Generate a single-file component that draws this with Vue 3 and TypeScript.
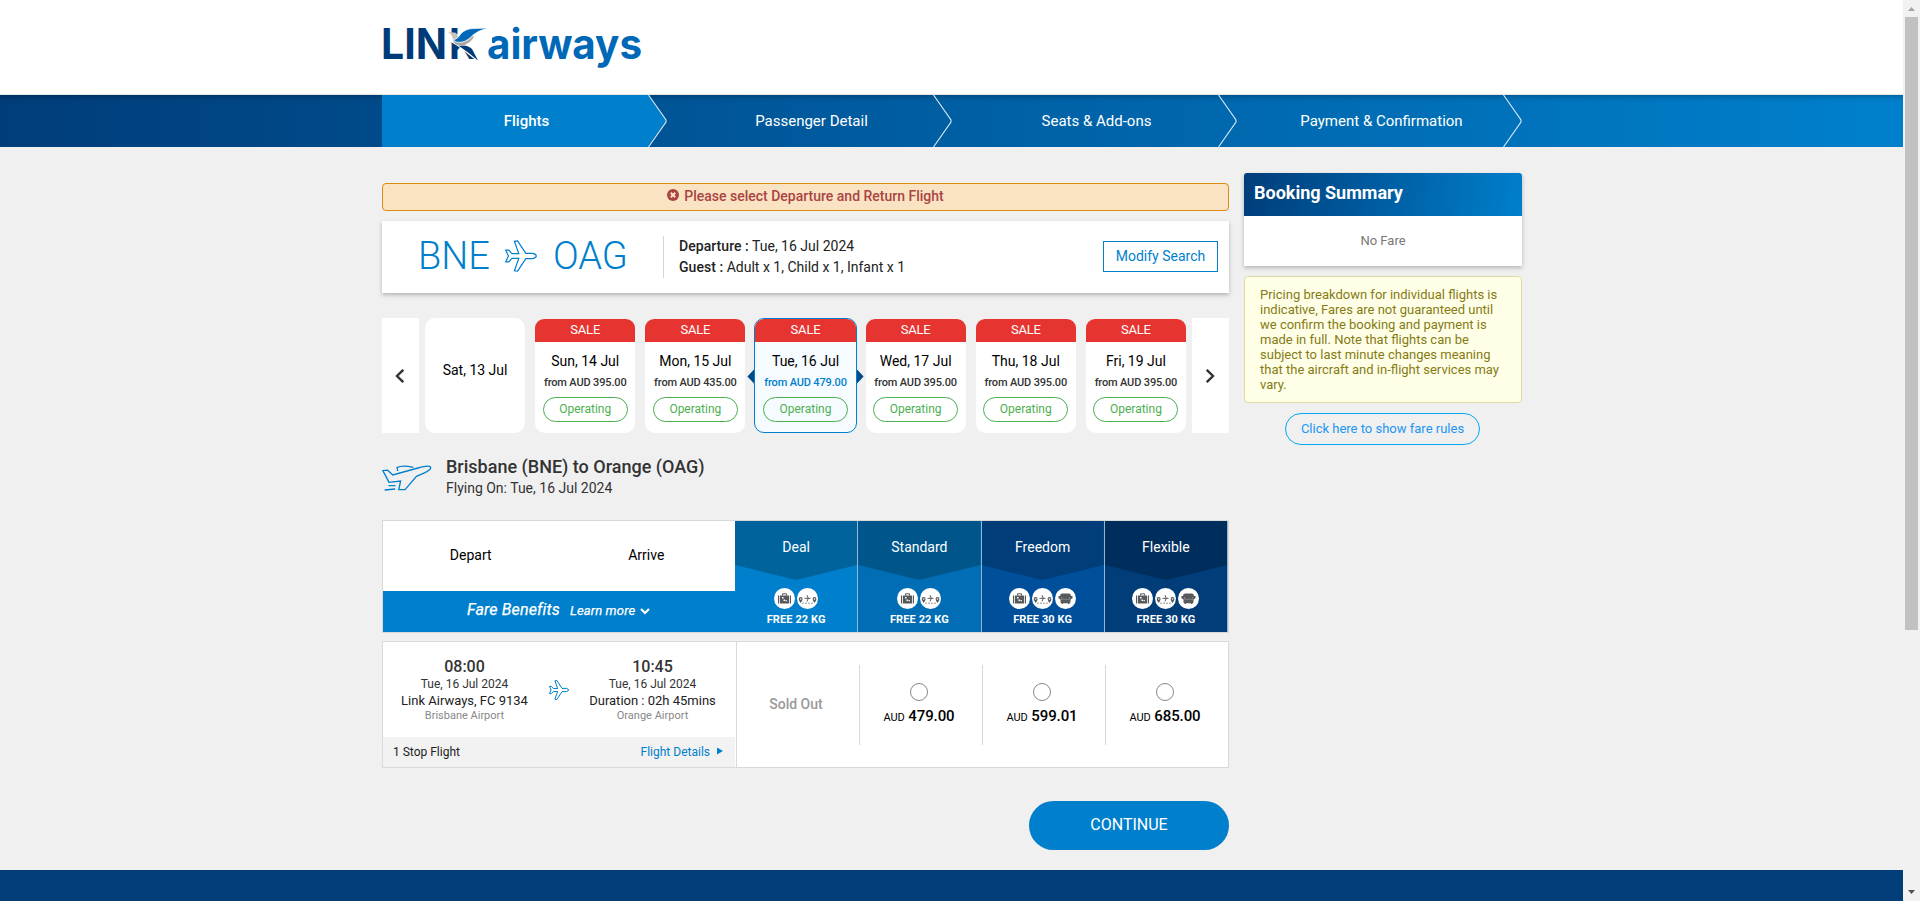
<script setup lang="ts">
interface DayFare {
  label: string
  price?: string
  active?: boolean
}
interface FareBrand {
  name: string
  key: string
  baggage: string
  seat: boolean
}

const steps: string[] = ['Flights', 'Passenger Detail', 'Seats & Add-ons', 'Payment & Confirmation']

const days: DayFare[] = [
  { label: 'Sat, 13 Jul' },
  { label: 'Sun, 14 Jul', price: '395.00' },
  { label: 'Mon, 15 Jul', price: '435.00' },
  { label: 'Tue, 16 Jul', price: '479.00', active: true },
  { label: 'Wed, 17 Jul', price: '395.00' },
  { label: 'Thu, 18 Jul', price: '395.00' },
  { label: 'Fri, 19 Jul', price: '395.00' },
]

const brands: FareBrand[] = [
  { name: 'Deal', key: 'deal', baggage: 'FREE 22 KG', seat: false },
  { name: 'Standard', key: 'standard', baggage: 'FREE 22 KG', seat: false },
  { name: 'Freedom', key: 'freedom', baggage: 'FREE 30 KG', seat: true },
  { name: 'Flexible', key: 'flexible', baggage: 'FREE 30 KG', seat: true },
]

const prices: string[] = ['479.00', '599.01', '685.00']
</script>

<template>
  <div class="window">
    <div class="page">
      <header class="top">
        <svg class="logo" width="264" height="60" viewBox="0 0 264 60">
          <text x="-1" y="44" class="logo-link" textLength="66" lengthAdjust="spacingAndGlyphs">LIN</text>
          <text x="67" y="44" class="logo-link" textLength="28" lengthAdjust="spacingAndGlyphs">K</text>
          <text x="105" y="44" class="logo-air" textLength="155" lengthAdjust="spacingAndGlyphs">airways</text>
          <path d="M76.500 12 H110 V30 L96 30 L106 46 L96 47 L77 32 L69 27 L69 20 L76.500 19 Z" fill="#fff" />
          <path d="M77 31 Q85 29 90 34 L96 45.500 Q86 37 77 31 Z" fill="#003a78" />
          <path d="M66 17 L72 17.500 Q75.500 17.500 76 22 Q84 17 92 21 Q87 29 79 31 Q72 30 70.500 23 Q70 19 66 17Z" fill="#c8c4bf" />
          <path d="M71 26 Q78 30 86 26 L92 21 Q90 28 79 31 Q73 30 71 26Z" fill="#aaa6a1" />
          <path d="M71.500 25 Q76 24 79 18.500 Q84 13.500 92 13.500 L106 13 Q96 15.500 91 20 Q83 29 74 27Z" fill="#0068b7" stroke="#fff" stroke-width=".7" />
        </svg>
      </header>

      <nav class="steps">
        <div class="steps-inner">
          <div v-for="(s, i) in steps" :key="s" class="step" :class="{ current: i === 0 }">
            <span>{{ s }}</span>
            <svg class="step-edge" width="20" height="52" viewBox="0 0 20 52">
              <path d="M.5 0 L18 25 V27 L.5 52" fill="none" stroke="#dbe9f5" stroke-width="1.1" />
            </svg>
          </div>
        </div>
      </nav>

      <main class="content">
        <section class="left">
          <div class="alert">
            <svg width="12" height="12" viewBox="0 0 12 12">
              <circle cx="6" cy="6" r="6" fill="#a94442" />
              <path d="M3.8 3.8 8.2 8.2 M8.2 3.8 3.8 8.2" stroke="#fae3c3" stroke-width="2" />
            </svg>
            <span>Please select Departure and Return Flight</span>
          </div>

          <div class="search">
            <div class="route">
              <span>BNE</span>
              <svg class="plane" width="32" height="32" viewBox="0 0 32 32">
                <path d="M.8 10.2H3.8L7 13.6H13.8L9.4 1.2 12.6 .8 20.8 13.4H28Q31.3 14.4 31.3 16 31.3 17.6 28 18.6H20.8L12.6 31.2 9.4 30.8 13.8 18.4H7L3.8 21.8H.8L3.4 16Z" />
              </svg>
              <span>OAG</span>
            </div>
            <div class="trip">
              <div><b>Departure :</b> Tue, 16 Jul 2024</div>
              <div><b>Guest :</b> Adult x 1, Child x 1, Infant x 1</div>
            </div>
            <button class="modify">Modify Search</button>
          </div>

          <div class="days">
            <div class="pager">
              <svg width="10" height="14" viewBox="0 0 10 14"><path d="M8.3 .8 2 7 8.3 13.2" /></svg>
            </div>
            <div class="day-row">
              <div v-for="d in days" :key="d.label" class="day" :class="{ active: d.active, empty: !d.price }">
                <template v-if="d.price">
                  <div class="sale">SALE</div>
                  <div class="day-label">{{ d.label }}</div>
                  <div class="day-price">from AUD {{ d.price }}</div>
                  <div class="operating">Operating</div>
                </template>
                <div v-else class="day-label">{{ d.label }}</div>
              </div>
            </div>
            <div class="pager">
              <svg width="10" height="14" viewBox="0 0 10 14"><path d="M1.7 .8 8 7 1.7 13.2" /></svg>
            </div>
          </div>

          <div class="leg">
            <svg width="50" height="28" viewBox="0 0 50 28">
              <path d="M.8 6.6 5.6 6.2 10.8 11 36 4Q47 .8 48.6 3.2 49.6 5.4 43 8.6L34.5 12.4 23 25.6H16.8L18.6 17 7 18.4Q4.4 13 .8 6.6Z" />
              <path d="M15.8 7 15 3.6Q20 .6 31.4 3.4" />
              <path d="M6.5 21.6H13.5 M2.6 26 13.2 25" />
            </svg>
            <div>
              <h2>Brisbane (BNE) to Orange (OAG)</h2>
              <p>Flying On: Tue, 16 Jul 2024</p>
            </div>
          </div>

          <div class="fare-head">
            <div class="fh-left">
              <div class="fh-labels"><span>Depart</span><span>Arrive</span></div>
              <div class="benefits">
                <em>Fare Benefits</em><em class="more">Learn more</em>
                <svg width="10" height="7" viewBox="0 0 10 7"><path d="M1 1 5 5 9 1" fill="none" stroke="#fff" stroke-width="2.2" /></svg>
              </div>
            </div>
            <div v-for="b in brands" :key="b.key" class="brand" :class="b.key">
              <div class="brand-name">{{ b.name }}</div>
              <div class="perks">
                <svg width="21" height="21" viewBox="0 0 21 21">
                  <circle cx="10.5" cy="10.5" r="10.5" fill="#fff" />
                  <path d="M8.500 7.500V5.800H12.500V7.500" fill="none" stroke="#58595b" />
                  <path d="M4 7.500H5.200V15.500H4Z M6 7.500H15V15.500H6Z M15.800 7.500H17V15.500H15.800Z" fill="#58595b" />
                  <path d="M8 9h1.500v1.500H8Z M9.500 11.500h1.500v1.500H9.500Z M11.500 12h1.300v1.300H11.500Z" fill="#fff" />
                </svg>
                <svg width="21" height="21" viewBox="0 0 21 21">
                  <circle cx="10.5" cy="10.5" r="10.5" fill="#fff" />
                  <path d="M3.7 9A2 2 0 0 1 5.6 11Q5.6 12.5 3.7 15 1.7 12.5 1.7 11A2 2 0 0 1 3.7 9Z M17.5 9A2 2 0 0 1 19.4 11Q19.4 12.5 17.5 15 15.6 12.5 15.6 11A2 2 0 0 1 17.5 9Z" fill="#58595b" />
                  <circle cx="3.7" cy="11" r=".8" fill="#fff" /><circle cx="17.5" cy="11" r=".8" fill="#fff" />
                  <path d="M7.5 10.3H13.5 M10 7.2 11.3 10.3 10 13.4" fill="none" stroke="#58595b" />
                  <path d="M5 15.2H16" stroke="#999" stroke-dasharray="2 1" />
                </svg>
                <svg v-if="b.seat" width="21" height="21" viewBox="0 0 21 21">
                  <circle cx="10.5" cy="10.5" r="10.5" fill="#fff" />
                  <path d="M7 5.5H14Q16 5.500 16 8H17.500V10.300L15.500 11.500V14.500L14.500 15V16H13V15.300H8V16H6.500V15L5.500 14.500V11.500L3.500 10.300V8H5Q5 5.500 7 5.500Z" fill="#58595b" />
                  <path d="M6.500 9V11.300H14.500V9" fill="none" stroke="#aaa" stroke-width=".5" />
                </svg>
              </div>
              <div class="kg">{{ b.baggage }}</div>
            </div>
          </div>

          <div class="flight">
            <div class="fl-left">
              <div class="fl-info">
                <div class="stop">
                  <strong>08:00</strong><span class="dt">Tue, 16 Jul 2024</span>
                  <span class="ln">Link Airways, FC 9134</span><span class="ap">Brisbane Airport</span>
                </div>
                <svg class="plane small" width="20" height="20" viewBox="0 0 32 32">
                  <path d="M.8 10.2H3.8L7 13.6H13.8L9.4 1.2 12.6 .8 20.8 13.4H28Q31.3 14.4 31.3 16 31.3 17.6 28 18.6H20.8L12.6 31.2 9.4 30.8 13.8 18.4H7L3.8 21.8H.8L3.4 16Z" />
                </svg>
                <div class="stop">
                  <strong>10:45</strong><span class="dt">Tue, 16 Jul 2024</span>
                  <span class="ln">Duration : 02h 45mins</span><span class="ap">Orange Airport</span>
                </div>
              </div>
              <div class="fl-foot">
                <span>1 Stop Flight</span>
                <a>Flight Details<i></i></a>
              </div>
            </div>
            <div class="fares">
              <div class="fare sold">Sold Out</div>
              <div v-for="p in prices" :key="p" class="fare">
                <span class="radio"></span>
                <div class="amount"><small>AUD</small> {{ p }}</div>
              </div>
            </div>
          </div>

          <button class="continue">CONTINUE</button>
        </section>

        <aside class="right">
          <div class="summary">
            <h3>Booking Summary</h3>
            <p>No Fare</p>
          </div>
          <div class="note">
            Pricing breakdown for individual flights is indicative, Fares are not guaranteed until we confirm the booking and payment is made in full. Note that flights can be subject to last minute changes meaning that the aircraft and in-flight services may vary.
          </div>
          <button class="rules">Click here to show fare rules</button>
        </aside>
      </main>
      <footer class="foot"></footer>
    </div>

    <div class="scrollbar">
      <svg width="17" height="17" viewBox="0 0 17 17"><path d="M5 11H12L8.5 7Z" fill="#a3a3a3" /></svg>
      <div class="thumb"></div>
      <svg width="17" height="17" viewBox="0 0 17 17"><path d="M5 6H12L8.5 10Z" fill="#505050" /></svg>
    </div>
  </div>
</template>

<style>
body { overflow: hidden; background: #f0f0f0; }
</style>

<style scoped>
* { box-sizing: border-box; }
.window { display: flex; width: 1920px; height: 901px; overflow: hidden; font-family: Roboto, "Liberation Sans", sans-serif; font-size: 14px; color: #222; background: #f0f0f0; }
.page { width: 1903px; display: flex; flex-direction: column; }
button { font-family: inherit; padding: 0; }
h2, h3, p { margin: 0; font-weight: 400; }
svg { display: block; flex: none; }

.top { height: 95px; background: #fff; border-bottom: 1px solid #e4e4e4; padding: 15px 0 0 382px; }
.logo { overflow: visible; }
.logo-link, .logo-air { font-family: Inter, sans-serif; font-weight: 700; font-size: 42px; fill: #003a78; }
.logo-air { fill: #0068b7; }

.steps { height: 52px; padding-left: 382px; background: linear-gradient(90deg, #003d7a, #0080cc); box-shadow: inset 0 7px 7px -7px rgba(0, 0, 0, .4); }
.steps-inner { display: flex; width: 1140px; height: 52px; }
.step { position: relative; width: 285px; height: 52px; padding-left: 4px; display: flex; align-items: center; justify-content: center; color: #fff; font-size: 15px; }
.step.current { font-weight: 500; }
.step.current::before { content: ""; position: absolute; inset: 0; background: #007fcc; clip-path: polygon(0 0, 266px 0, 284px 26px, 266px 52px, 0 52px); }
.step span { position: relative; }
.step-edge { position: absolute; left: 265.5px; top: 0; }

.content { display: flex; gap: 15px; width: 1140px; margin-left: 382px; height: 723px; }
.left { width: 847px; padding-top: 36px; display: flex; flex-direction: column; }
.right { width: 278px; padding-top: 26px; }

.alert { height: 28px; border: 1px solid #dd8b0b; border-radius: 4px; background: #fae3c3; color: #a94442; font-weight: 500; display: flex; justify-content: center; gap: 5px; line-height: 25px; }
.alert svg { margin-top: 5px; }

.search { height: 72px; margin-top: 10px; background: #fff; box-shadow: 0 2px 4px rgba(0, 0, 0, .25); display: flex; align-items: center; padding-right: 11px; }
.route { width: 281px; padding-left: 36px; display: flex; align-items: center; font-weight: 300; font-size: 38px; line-height: 70px; padding-bottom: 2px; color: #007fcc; }
.plane { fill: none; stroke: #007fcc; stroke-width: 1.2; margin: 0 16px 0 15px; }
.trip { flex: 1; height: 42px; border-left: 1px solid #d5d5d5; padding-left: 15px; line-height: 21px; }
.trip b { font-weight: 500; letter-spacing: .05px; }
.modify { width: 115px; height: 31px; margin-bottom: 2px; background: #fff; border: 1px solid #007fcc; color: #007fcc; font-size: 14px; }

.days { display: flex; height: 115px; margin-top: 25px; }
.pager { width: 37px; background: #fff; display: flex; align-items: center; justify-content: center; }
.pager svg { fill: none; stroke: #333; stroke-width: 2.4; margin-right: 1px; }
.day-row { flex: 1; display: grid; grid-template-columns: repeat(7, 1fr); gap: 10px; padding: 0 6px; }
.day { position: relative; background: #fff; border-radius: 10px; text-align: center; margin-top: 1px; display: flex; flex-direction: column; align-items: center; color: #000; white-space: nowrap; }
.day.empty { margin-top: 0; padding-top: 43px; }
.sale { width: 100%; height: 23px; line-height: 22px; background: #e63431; color: #fff; font-size: 13px; letter-spacing: -.2px; border-radius: 9px 9px 0 0; }
.day-label { font-size: 14px; line-height: 18px; }
.sale + .day-label { margin-top: 10px; }
.day-price { font-size: 11px; font-weight: 500; letter-spacing: -.15px; color: #333; line-height: 14px; margin-top: 6px; }
.operating { width: 85px; height: 25px; margin-top: 7px; border: 1px solid #4caf50; border-radius: 13px; color: #4caf50; font-size: 12px; line-height: 22px; }
.day.active { margin: 0 -1px; border: 1px solid #007fcc; background: #f6fbff; }
.active .day-price { color: #007fcc; }
.active::before, .active::after { content: ""; position: absolute; top: 50px; width: 7px; height: 15px; background: #004b87; }
.active::before { left: -8px; clip-path: polygon(0 50%, 100% 0, 100% 100%); }
.active::after { right: -8px; clip-path: polygon(100% 50%, 0 0, 0 100%); }

.leg { display: flex; gap: 14px; margin-top: 23px; height: 43px; }
.leg svg { margin-top: 8px; fill: none; stroke: #007fcc; stroke-width: 1.3; }
.leg h2 { font-size: 18px; font-weight: 500; line-height: 22px; color: #333; letter-spacing: 0; }
.leg p { line-height: 21px; color: #333; }

.fare-head { display: flex; height: 113px; margin-top: 21px; border: 1px solid #d9d9d9; }
.fh-left { width: 352px; display: flex; flex-direction: column; }
.fh-labels { height: 70px; background: #fff; display: flex; align-items: center; color: #000; padding: 0 1px 2px 0; }
.fh-labels span { width: 50%; text-align: center; }
.benefits { flex: 1; background: #007fcc; color: #fff; display: flex; align-items: baseline; padding: 9px 0 0 84px; font-size: 16px; line-height: 20px; -webkit-text-stroke: .25px #fff; }
.benefits em { letter-spacing: .15px; }
.benefits .more { font-size: 13px; margin-left: 10px; }
.benefits svg { margin-left: 5px; }
.brand { flex: 1; color: #fff; text-align: center; border-right: 1px solid #94b6cf; position: relative; z-index: 0; }
.brand::before { content: ""; position: absolute; z-index: -1; inset: 0 0 auto; height: 59px; clip-path: polygon(0 0, 100% 0, 100% 44px, 50% 100%, 0 44px); }
.deal { background: #007fcc; } .deal::before { background: #00639c; }
.standard { background: #006db5; } .standard::before { background: #00568b; }
.freedom { background: #004f9b; } .freedom::before { background: #003d79; }
.flexible { background: #003d79; } .flexible::before { background: #002e5c; }
.brand-name { line-height: 52px; height: 67px; }
.perks { display: flex; justify-content: center; gap: 2px; }
.kg { font-size: 11px; font-weight: 700; letter-spacing: .1px; line-height: 14px; margin-top: 4px; }

.flight { display: flex; height: 127px; margin-top: 8px; border: 1px solid #d9d9d9; background: #fff; }
.fl-left { width: 354px; border-right: 1px solid #d9d9d9; }
.fl-info { height: 95px; padding: 16px 0 0 12px; display: flex; }
.stop { width: 139px; display: flex; flex-direction: column; align-items: center; flex: none; }
.stop strong { font-size: 16px; line-height: 18px; font-weight: 500; color: #333; }
.dt { font-size: 12px; line-height: 17px; color: #333; }
.ln { font-size: 13px; line-height: 16px; white-space: nowrap; }
.ap { font-size: 11px; line-height: 14px; color: #888; }
.small { margin: 22px 14px 0 15px; stroke-width: 1.6; }
.fl-foot { width: 352px; height: 30px; background: #f2f2f2; display: flex; justify-content: space-between; align-items: center; font-size: 12px; padding: 0 12px 1px 10px; }
.fl-foot a { color: #007fcc; display: flex; align-items: center; }
.fl-foot i { width: 6px; height: 7px; margin: -1px 0 0 7px; background: #007fcc; clip-path: polygon(0 0, 100% 50%, 0 100%); }
.fares { flex: 1; display: flex; padding: 23px 0 22px; }
.fare { flex: 1; display: flex; flex-direction: column; align-items: center; border-left: 1px solid #d9d9d9; padding-right: 4px; }
.fare.sold { border: 0; color: #999; font-weight: 500; line-height: 79px; }
.radio { width: 18px; height: 18px; margin-top: 18px; border: 1px solid #888; border-radius: 50%; }
.amount { font-weight: 500; font-size: 15px; letter-spacing: -.1px; color: #000; line-height: 20px; margin-top: 5px; white-space: nowrap; }
.amount small { font-size: 11px; font-weight: 400; }
.continue { align-self: flex-end; margin-top: 33px; width: 200px; height: 49px; flex: none; border: 0; border-radius: 25px; background: #007fcc; color: #fff; font-size: 16px; padding-bottom: 3px; }

.summary { box-shadow: 0 2px 4px rgba(0, 0, 0, .25); border-radius: 3px 3px 0 0; background: #fff; }
.summary h3 { height: 43px; line-height: 40px; padding-left: 10px; border-radius: 3px 3px 0 0; background: linear-gradient(100deg, #003d7a, #007fcc); color: #fff; font-size: 18px; font-weight: 700; }
.summary p { height: 50px; line-height: 49px; text-align: center; font-size: 13px; color: #777; }
.note { height: 127px; margin-top: 10px; border: 1px solid #dfd9a8; border-radius: 4px; background: #ffffe7; color: #857b14; font-size: 13px; line-height: 15px; padding: 10px 15px; }
.rules { display: block; width: 195px; height: 32px; margin: 10px auto 0 41px; border: 1px solid #03a9f4; border-radius: 16px; background: transparent; color: #2196f3; font-size: 13px; padding-bottom: 1px; }
.foot { height: 31px; background: #003d79; }

.scrollbar { width: 17px; height: 901px; background: #f1f1f1; display: flex; flex-direction: column; }
.thumb { width: 13px; height: 613px; margin: 0 0 254px 2px; background: #c1c1c1; }
</style>
